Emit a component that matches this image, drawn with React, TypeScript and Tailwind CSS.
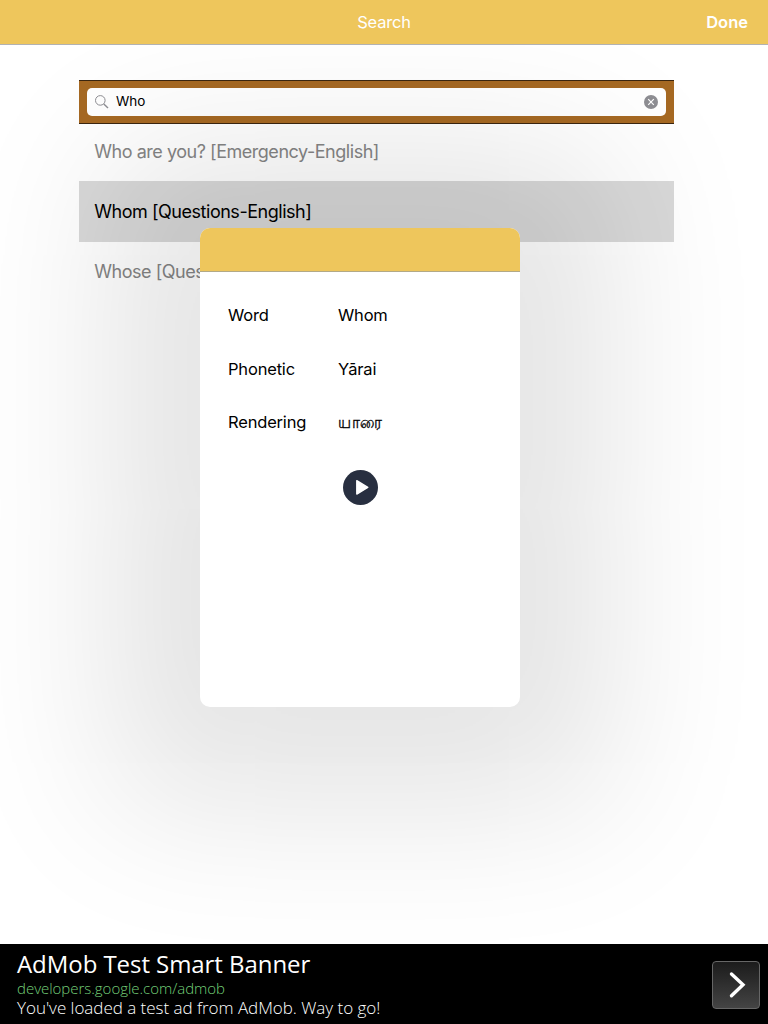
const results = [
  { text: "Who are you? [Emergency-English]", selected: false },
  { text: "Whom [Questions-English]", selected: true },
  { text: "Whose [Questions-English]", selected: false },
];

function NavBar() {
  return (
    <header className="relative z-10 grid h-[45px] shrink-0 grid-cols-3 items-center border-b border-[#b2b2b2] bg-[#eec65c] text-[16.5px] text-white">
      <span />
      <span className="text-center tracking-[-0.2px]">Search</span>
      <span className="pr-5 text-right font-semibold">Done</span>
    </header>
  );
}

function SearchBar() {
  return (
    <div className="h-11 border-y border-[#3b2610] bg-[#a66923] px-2 py-[7px]">
      <div className="flex h-7 items-center rounded-[5px] bg-white pr-2 pl-2">
        <svg className="size-[14px]" viewBox="0 0 14 14" fill="none" stroke="#8e8e93">
          <circle cx="5.3" cy="5.4" r="4.8" />
          <path d="M8.8 8.9 13 13" strokeWidth="1.4" />
        </svg>
        <span className="ml-[7px] grow pb-px text-[13.5px] text-black">Who</span>
        <svg className="size-[14px]" viewBox="0 0 14 14">
          <circle cx="7" cy="7" r="7" fill="#8e8e93" />
          <path d="m4.2 4.2 5.6 5.6m0-5.6L4.2 9.8" stroke="white" strokeWidth="1.2" />
        </svg>
      </div>
    </div>
  );
}

function WordDialog() {
  return (
    <section className="absolute top-[228px] left-[200px] h-[479px] w-80 rounded-[10px] bg-white shadow-[0_12px_155px_90px_rgba(0,0,0,0.11)]">
      <div className="h-11 rounded-t-[10px] border-b border-[#b2a987] bg-[#eec65c]" />
      <dl className="grid grid-cols-[110px_1fr] gap-y-[29.5px] px-7 pt-[31px] text-[16.5px] leading-6 tracking-[-0.18px] text-black">
        <dt>Word</dt>
        <dd>Whom</dd>
        <dt>Phonetic</dt>
        <dd>Yārai</dd>
        <dt>Rendering</dt>
        <dd className="origin-left scale-x-90 tracking-normal [-webkit-text-stroke:0.3px_black]">யாரை</dd>
      </dl>
      <button className="mt-[36px] ml-[143px] block size-[35px]" aria-label="Play">
        <svg viewBox="0 0 35 35">
          <circle cx="17.5" cy="17.5" r="17.5" fill="#282f40" />
          <path d="M14 11v14l12-7z" fill="#1c2230" />
          <path d="M13.8 10.7v13.4l11-6.7z" fill="white" stroke="white" strokeWidth="1.4" strokeLinejoin="round" />
        </svg>
      </button>
    </section>
  );
}

function AdBanner() {
  return (
    <footer className="relative z-10 flex h-20 shrink-0 items-center justify-between bg-black pr-2 pl-[17px] font-['Open_Sans',sans-serif] whitespace-nowrap">
      <div className="-mt-[2px]">
        <div className="text-[24px] leading-[28px] tracking-[-0.06px] text-white">AdMob Test Smart Banner</div>
        <div className="text-[15px] leading-[20px] font-light tracking-[-0.02px] text-[#74cf78]">developers.google.com/admob</div>
        <div className="text-[17px] leading-[19px] font-light tracking-[-0.03px] text-white">You've loaded a test ad from AdMob. Way to go!</div>
      </div>
      <div className="mt-[2px] flex size-12 items-center justify-center rounded border border-[#666] bg-linear-to-b from-[#1c1c1c] to-[#444]">
        <svg className="size-12 shrink-0" viewBox="0 0 48 48" fill="none" stroke="white" strokeWidth="3.4" strokeLinecap="round">
          <path d="m19.5 13 11.5 10.7-11.5 11.1" />
        </svg>
      </div>
    </footer>
  );
}

export default function App() {
  return (
    <div className="relative flex h-[1024px] w-[768px] flex-col overflow-hidden bg-white font-['Inter','Noto_Sans',sans-serif]">
      <NavBar />
      <main className="grow pt-[35px] pl-[79px]">
        <div className="w-[595px]">
          <SearchBar />
          <ul className="-mt-[3px] text-[18px] tracking-[-0.47px]">
            {results.map((r) => (
              <li
                key={r.text}
                className={
                  r.selected
                    ? "flex h-[61px] items-center bg-[#d9d9d9] pl-[15.3px] text-black"
                    : "flex h-[60px] items-center pb-px pl-[15.3px] text-[#858585] first:pb-0"
                }
              >
                {r.text}
              </li>
            ))}
          </ul>
        </div>
      </main>
      <WordDialog />
      <AdBanner />
    </div>
  );
}
